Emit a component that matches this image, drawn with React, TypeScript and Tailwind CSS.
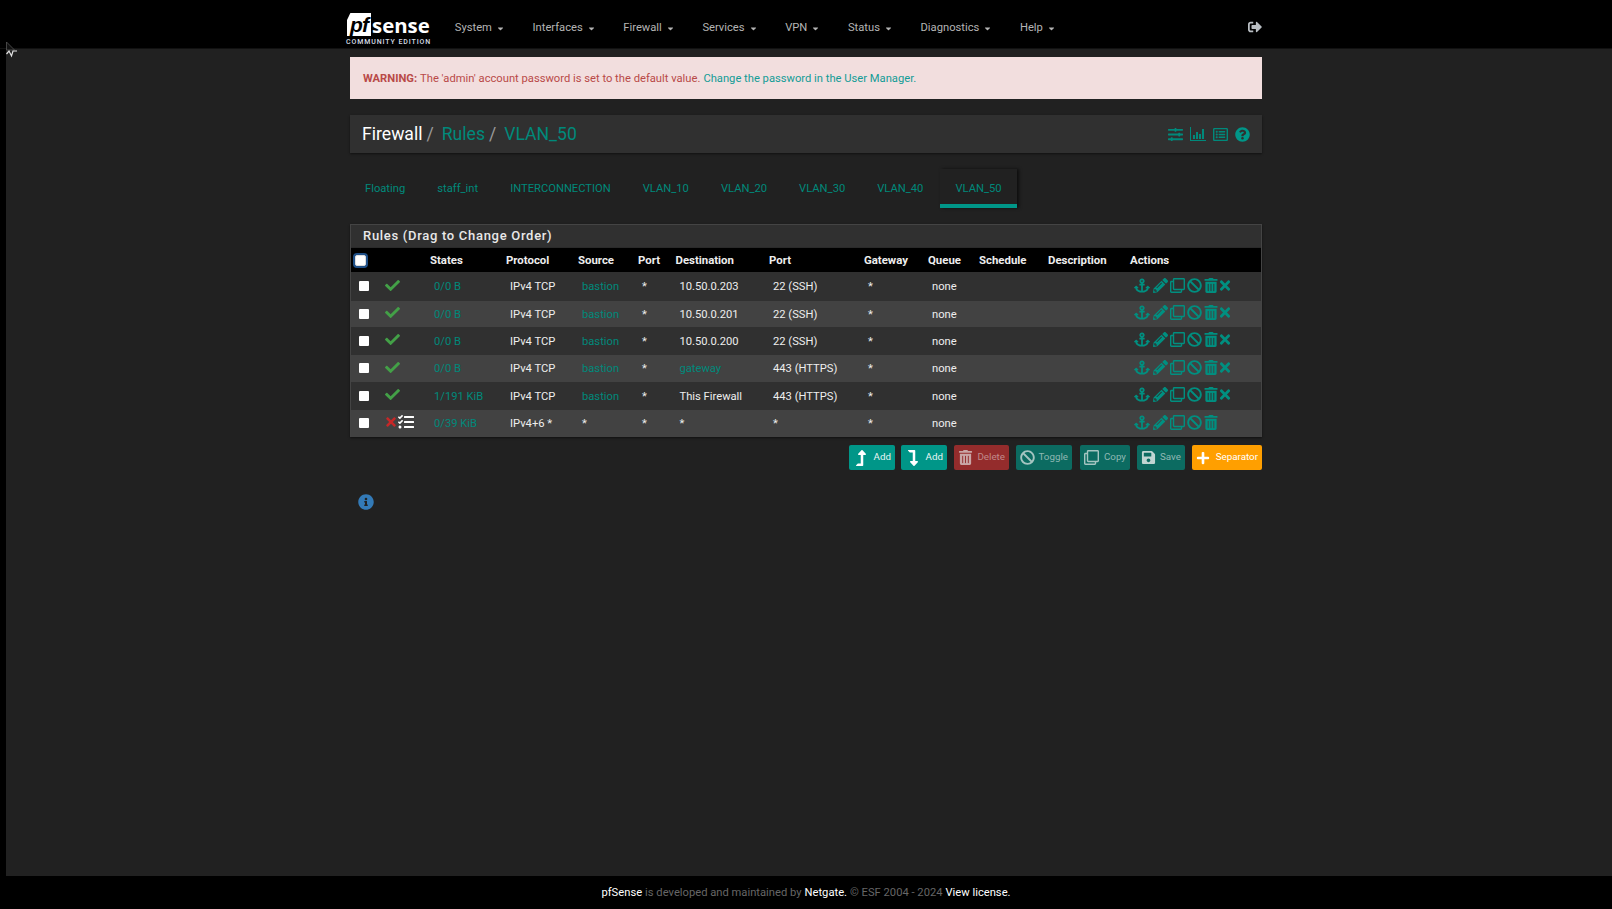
import React from "react";
import {
  FaAnchor, FaPencilAlt, FaRegClone, FaBan, FaTrashAlt, FaTimes, FaCheck, FaTasks,
  FaSlidersH, FaQuestionCircle, FaInfoCircle, FaSave, FaSignOutAlt,
  FaLevelUpAlt, FaLevelDownAlt, FaPlus, FaRegListAlt, FaCaretDown,
} from "react-icons/fa";

const NAV = ["System", "Interfaces", "Firewall", "Services", "VPN", "Status", "Diagnostics", "Help"];
const TABS = ["Floating", "staff_int", "INTERCONNECTION", "VLAN_10", "VLAN_20", "VLAN_30", "VLAN_40"];

type Row = { h: string; states: string; proto: string; src: string; srcLink: boolean; dst: string; dstLink: boolean; port: string; off?: boolean };
const ROWS: Row[] = [
  { h: "h-[29px]", states: "0/0 B", proto: "IPv4 TCP", src: "bastion", srcLink: true, dst: "10.50.0.203", dstLink: false, port: "22 (SSH)" },
  { h: "h-[26px]", states: "0/0 B", proto: "IPv4 TCP", src: "bastion", srcLink: true, dst: "10.50.0.201", dstLink: false, port: "22 (SSH)" },
  { h: "h-[28px]", states: "0/0 B", proto: "IPv4 TCP", src: "bastion", srcLink: true, dst: "10.50.0.200", dstLink: false, port: "22 (SSH)" },
  { h: "h-[27px]", states: "0/0 B", proto: "IPv4 TCP", src: "bastion", srcLink: true, dst: "gateway", dstLink: true, port: "443 (HTTPS)" },
  { h: "h-[28px]", states: "1/191 KiB", proto: "IPv4 TCP", src: "bastion", srcLink: true, dst: "This Firewall", dstLink: false, port: "443 (HTTPS)" },
  { h: "h-[27px]", states: "0/39 KiB", proto: "IPv4+6 *", src: "*", srcLink: false, dst: "*", dstLink: false, port: "*", off: true },
];

function Chart() {
  return (
    <svg viewBox="0 0 16 14" className="h-[14px] w-[16px]" fill="currentColor">
      <path d="M0 0h1v13h15v1H0z" />
      <rect x="3" y="8" width="2" height="4" />
      <rect x="6" y="5" width="2" height="7" />
      <rect x="9" y="7" width="2" height="5" />
      <rect x="12" y="2" width="2" height="10" />
    </svg>
  );
}

function ActionBtn({ bg, icon, label, labelCls, w }: { bg: string; icon: React.ReactNode; label: string; labelCls: string; w: string }) {
  return (
    <div className={`flex h-[25px] items-center justify-between rounded-[2px] pl-[4px] pr-[4px] ${bg} ${w}`}>
      <span className="flex items-center">{icon}</span>
      <span className={`pb-[2px] text-[9.8px] leading-none ${labelCls}`}>{label}</span>
    </div>
  );
}

export default function App() {
  return (
    <div className="relative flex h-[909px] w-[1612px] flex-col overflow-hidden bg-black text-[11.2px] text-white" style={{ fontFamily: "Roboto, sans-serif" }}>
      {/* mouse pointer caught in the shot */}
      <svg viewBox="0 0 14 18" className="absolute left-[5px] top-[41px] h-[18px] w-[14px]">
        <path d="M1.5 1 L1.5 9 L9.5 9 Z" fill="#111" stroke="#555" strokeWidth="0.8" />
        <path d="M1.5 13 L4 10 L6.5 15 L8 10 L12 10" fill="none" stroke="#e5e5e5" strokeWidth="1.2" />
      </svg>

      {/* top bar */}
      <header className="flex h-[49px] shrink-0 border-b border-[#111] pl-[346px]">
        <div className="relative mt-[13px] h-[33px] w-[85px] shrink-0">
          <div className="absolute left-[1px] top-0 flex h-[23px] w-[24px] items-center justify-center bg-white [clip-path:polygon(14%_0,100%_0,100%_100%,0_100%,0_30%)]">
            <span className="text-[21px] font-bold italic leading-none text-black" style={{ fontFamily: "'Liberation Sans', sans-serif", letterSpacing: "-1px" }}>pf</span>
          </div>
          <span className="absolute left-[26px] top-[-1px] text-[20.4px] font-bold leading-[26px] text-white" style={{ fontFamily: "'Open Sans', sans-serif" }}>sense</span>
          <span className="absolute left-0 top-[25px] whitespace-nowrap text-[7px] font-medium leading-[9px] tracking-[0.9px] text-[#d5dde5]">COMMUNITY EDITION</span>
        </div>
        <nav className="ml-[10px] flex h-[48px] items-center pt-[8px] text-[#b4b4b4]">
          {NAV.map((n) => (
            <div key={n} className="flex items-center px-[13.8px]">
              <span>{n}</span>
              <FaCaretDown className="ml-[4px] mt-[2px] text-[9px]" />
            </div>
          ))}
        </nav>
        <div className="ml-auto mr-[350px] mt-[20px] text-[#b9bec3]">
          <FaSignOutAlt className="text-[14px]" />
        </div>
      </header>

      {/* body */}
      <div className="flex min-h-0 flex-1">
        <div className="w-[6px] shrink-0 bg-black" />
        <main className="flex-1 bg-[#212121] pl-[344px]">
          <div className="w-[912px]">
            <div className="mt-[8px] flex h-[42px] items-center bg-[#f2dede] pl-[13px] pt-[2px] text-[#b94a48]">
              <b className="font-bold">WARNING:</b>
              <span className="ml-[3px]">The 'admin' account password is set to the default value.</span>
              <span className="ml-[3px] text-[#139c96]">Change the password in the User Manager.</span>
            </div>

            <div className="mt-[16px] flex h-[38px] items-center justify-between bg-[#303030] pl-[12px] pr-[12px] shadow-[0_1px_2px_rgba(0,0,0,0.5)]">
              <div className="flex items-center pt-[2px] text-[17.6px] leading-none">
                <span className="text-white">Firewall</span>
                <span className="ml-[4px] text-[#9a9a9a]">/</span>
                <span className="ml-[8px] text-[#00897b]">Rules</span>
                <span className="ml-[4px] text-[#9a9a9a]">/</span>
                <span className="ml-[8px] text-[#00897b]">VLAN_50</span>
              </div>
              <div className="flex items-center gap-[7px] text-[#00897b]">
                <FaSlidersH className="h-[15px] w-[15px]" />
                <Chart />
                <FaRegListAlt className="h-[15px] w-[15px]" />
                <FaQuestionCircle className="h-[15px] w-[15px] text-[#009688]" />
              </div>
            </div>

            {/* tabs */}
            <div className="mt-[16px] flex h-[39px] items-stretch">
              {TABS.map((t, i) => (
                <div key={t} className={`flex items-center px-[16px] pt-[2px] text-[#00897b] ${i === 0 ? "pl-[15px]" : ""}`}>{t}</div>
              ))}
              <div className="ml-[1px] flex items-center border-b-[4px] border-[#009688] bg-[#212121] px-[15px] pt-[6px] text-[#00897b] shadow-[2px_0_3px_rgba(0,0,0,0.6)]">VLAN_50</div>
            </div>

            {/* panel */}
            <section className="mt-[16px] border border-[#444] border-b-0 bg-[#303030] shadow-[0_1px_2px_rgba(0,0,0,0.5)]">
              <h2 className="flex h-[23px] items-center border-b border-[#2a2a2a] pl-[12px] text-[13px] font-medium tracking-[0.7px] text-[#e8e8e8]">Rules (Drag to Change Order)</h2>
              <table className="w-full table-fixed border-collapse">
                <colgroup>
                  <col className="w-[29px]" /><col className="w-[50px]" /><col className="w-[76px]" /><col className="w-[72px]" /><col className="w-[60px]" /><col className="w-[37.5px]" /><col className="w-[93.5px]" /><col className="w-[95px]" /><col className="w-[64px]" /><col className="w-[51px]" /><col className="w-[69px]" /><col className="w-[82px]" /><col />
                </colgroup>
                <thead>
                  <tr className="h-[24px] bg-black text-left text-[11.4px] text-[#eee]">
                    <th className="p-0">
                      <input type="checkbox" readOnly className="ml-[4px] block h-[11px] w-[11px] appearance-none rounded-[2px] border border-[#ddd] bg-white shadow-[0_0_0_2px_#1f4f86]" />
                    </th>
                    <th className="p-0" />
                    {["States", "Protocol", "Source", "Port", "Destination", "Port", "Gateway", "Queue", "Schedule", "Description", "Actions"].map((h, i) => (
                      <th key={i} className="p-0 pt-[2px] font-bold">{h}</th>
                    ))}
                  </tr>
                </thead>
                <tbody>
                  {ROWS.map((r, i) => (
                    <tr key={i} className={`${r.h} ${i % 2 ? "bg-[#424242]" : "bg-[#303030]"}`}>
                      <td className="p-0 pb-[1px] pl-[8px]">
                        <input type="checkbox" readOnly className="block h-[10px] w-[10px] appearance-none rounded-[1px] bg-white" />
                      </td>
                      <td className="p-0 pb-[3px]">
                        <div className="flex items-center pl-[4px]">
                          {r.off ? (
                            <>
                              <FaTimes className="text-[14px] text-[#c62828]" />
                              <FaTasks className="ml-[0px] text-[16px] text-white" />
                            </>
                          ) : (
                            <FaCheck className="ml-[1px] text-[15px] text-[#43a047]" />
                          )}
                        </div>
                      </td>
                      <td className="p-0 pl-[4px] pt-[2px] text-[#00897b]">{r.states}</td>
                      <td className="p-0 pl-[4px] pt-[2px] text-[#eee]">{r.proto}</td>
                      <td className={`p-0 pl-[4px] pt-[2px] ${r.srcLink ? "text-[#00897b]" : "text-[#eee]"}`}>{r.src}</td>
                      <td className="p-0 pl-[4px] pt-[2px] text-[#eee]">*</td>
                      <td className={`p-0 pl-[4px] pt-[2px] ${r.dstLink ? "text-[#00897b]" : "text-[#eee]"}`}>{r.dst}</td>
                      <td className="whitespace-nowrap p-0 pl-[4px] pt-[2px] text-[#eee]">{r.port}</td>
                      <td className="p-0 pl-[4px] pt-[2px] text-[#eee]">*</td>
                      <td className="p-0 pl-[4px] pt-[2px] text-[#eee]">none</td>
                      <td className="p-0" />
                      <td className="p-0" />
                      <td className="p-0 pb-[3px] pl-[4px]">
                        <div className="flex items-center gap-[2px] text-[#008f80]">
                          <FaAnchor className="h-[15px] w-[16px]" />
                          <FaPencilAlt className="ml-[1px] h-[15px] w-[15px]" />
                          <FaRegClone className="h-[15px] w-[15px]" />
                          <FaBan className="h-[15px] w-[15px]" />
                          <FaTrashAlt className="h-[15px] w-[14px]" />
                          {!r.off && <FaTimes className="-ml-[1px] h-[15px] w-[12px]" />}
                        </div>
                      </td>
                    </tr>
                  ))}
                </tbody>
              </table>
            </section>

            {/* buttons */}
            <div className="mt-[8px] flex justify-end gap-[6px]">
              <ActionBtn w="w-[46px]" bg="bg-[#009688]" labelCls="text-[#e8f5f3]" label="Add" icon={<FaLevelUpAlt className="text-[16px] text-white" />} />
              <ActionBtn w="w-[46px]" bg="bg-[#009688]" labelCls="text-[#e8f5f3]" label="Add" icon={<FaLevelDownAlt className="text-[16px] text-white" />} />
              <ActionBtn w="w-[55px] ml-[1px]" bg="bg-[#942c2c]" labelCls="text-[#c08a8a]" label="Delete" icon={<FaTrashAlt className="text-[15px] text-[#c9a5a5]" />} />
              <ActionBtn w="w-[56px] ml-[1px]" bg="bg-[#0c6b61]" labelCls="text-[#8fb8b3]" label="Toggle" icon={<FaBan className="text-[15px] text-[#a5c5c1]" />} />
              <ActionBtn w="w-[50px] ml-[2px]" bg="bg-[#0c6b61]" labelCls="text-[#8fb8b3]" label="Copy" icon={<FaRegClone className="text-[15px] text-[#a5c5c1]" />} />
              <ActionBtn w="w-[48px] ml-[1px]" bg="bg-[#0c6b61]" labelCls="text-[#8fb8b3]" label="Save" icon={<FaSave className="text-[15px] text-[#c0d5d2]" />} />
              <ActionBtn w="w-[70px] ml-[1px]" bg="bg-[#ff9f00]" labelCls="text-white" label="Separator" icon={<FaPlus className="text-[14px] text-white" />} />
            </div>

            <div className="mt-[24px] pl-[8px]">
              <FaInfoCircle className="h-[16px] w-[16px] text-[#337ab7]" />
            </div>
          </div>
        </main>
      </div>

      {/* footer */}
      <footer className="flex h-[33px] shrink-0 items-center justify-center pt-[2px] text-[#666]">
        <span className="text-white">pfSense</span>
        <span className="ml-[3px]">is developed and maintained by</span>
        <span className="ml-[3px] text-white">Netgate.</span>
        <span className="ml-[3px]">© ESF 2004 - 2024</span>
        <span className="ml-[3px] text-white">View license.</span>
      </footer>
    </div>
  );
}
